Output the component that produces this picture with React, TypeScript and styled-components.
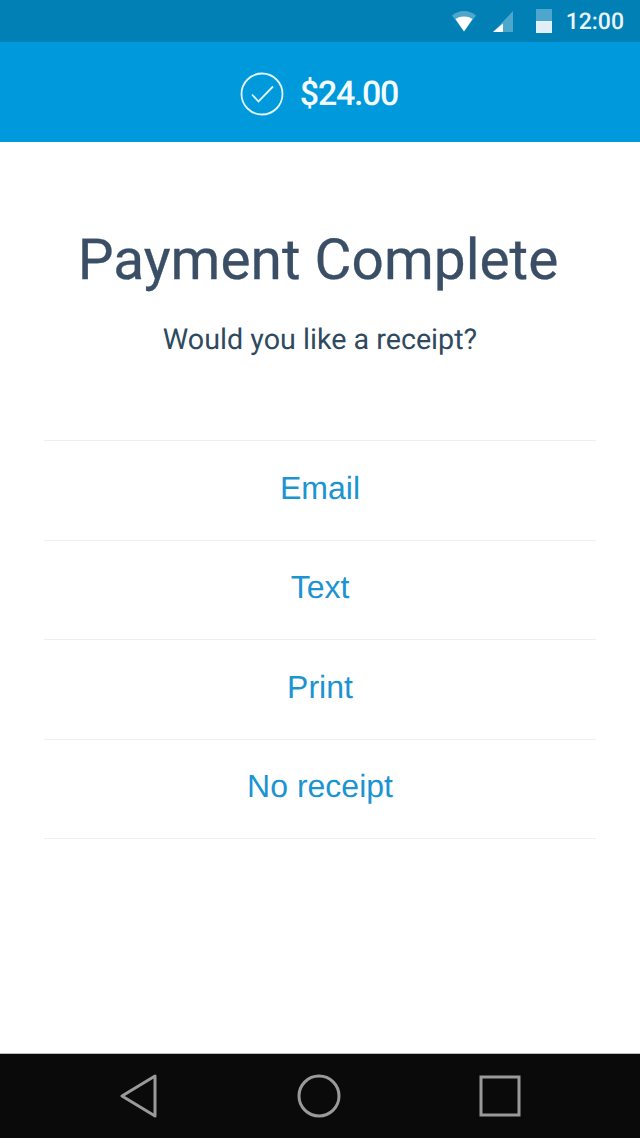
import { createGlobalStyle, styled } from "styled-components";

const receiptOptions = ["Email", "Text", "Print", "No receipt"];

const App = () => {
  return (
    <>
      <GlobalStyle />
      <Screen>
        <StatusBar>
          <svg width="26" height="22" viewBox="0 0 26 22">
            <path d="M1 5.500C4.500 2.500 8.500 1 13 1s8.500 1.500 12 4.500L13 21.500z" fill="#fff" fillOpacity="0.3" />
            <path d="M4.500 9C7 7.300 9.800 6.500 13 6.500s6 .8 8.500 2.500L13 21.500z" fill="#fff" />
          </svg>
          <SignalIcon width="22" height="24" viewBox="0 0 22 24">
            <path d="M1 23 21 2v21z" fill="#fff" fillOpacity="0.3" />
            <path d="M1 23 11 14.500V23z" fill="#fff" />
          </SignalIcon>
          <BatteryIcon width="16" height="24" viewBox="0 0 16 24">
            <rect width="16" height="13" fill="#fff" fillOpacity="0.3" />
            <rect y="12" width="16" height="12" fill="#fff" fillOpacity="0.88" />
          </BatteryIcon>
          <Clock>12:00</Clock>
        </StatusBar>
        <Header>
          <svg width="44" height="44" viewBox="0 0 44 44">
            <circle cx="22" cy="22" r="20.500" fill="none" stroke="#e4f5fc" strokeWidth="1.800" />
            <path d="M12 22.500l6.500 7L33 14.500" fill="none" stroke="#e4f5fc" strokeWidth="1.800" />
          </svg>
          <Amount>$24.00</Amount>
        </Header>
        <Content>
          <Title>Payment Complete</Title>
          <Subtitle>Would you like a receipt?</Subtitle>
          <OptionList>
            {receiptOptions.map((item) => (
              <Option key={item}>{item}</Option>
            ))}
          </OptionList>
        </Content>
        <NavBar>
          <svg width="38" height="44" viewBox="0 0 38 44">
            <path d="M35 2v40L2 22z" fill="none" stroke="#9a9a9a" strokeWidth="3" strokeLinejoin="round" />
          </svg>
          <svg width="44" height="44" viewBox="0 0 44 44">
            <circle cx="22" cy="22" r="20" fill="none" stroke="#9a9a9a" strokeWidth="3" />
          </svg>
          <svg width="42" height="42" viewBox="0 0 42 42">
            <rect x="2" y="2" width="38" height="38" fill="none" stroke="#9a9a9a" strokeWidth="3" />
          </svg>
        </NavBar>
      </Screen>
    </>
  );
};

export default App;

const GlobalStyle = createGlobalStyle`
  body {
    margin: 0;
    background: #fff;
    font-family: Roboto, sans-serif;
    text-rendering: geometricPrecision;
  }
`;

const Screen = styled.div`
  width: 640px;
  height: 1138px;
  display: flex;
  flex-direction: column;
  overflow: hidden;
`;

const StatusBar = styled.div`
  height: 42px;
  flex-shrink: 0;
  display: flex;
  align-items: center;
  justify-content: flex-end;
  padding-right: 16px;
  background: #0180b5;
`;

const SignalIcon = styled.svg`
  margin-left: 15px;
`;

const BatteryIcon = styled.svg`
  margin-left: 22px;
`;

const Clock = styled.span`
  margin-left: 14px;
  font-size: 23px;
  font-weight: 500;
  color: #eaf6fb;
`;

const Header = styled.div`
  height: 100px;
  flex-shrink: 0;
  box-sizing: border-box;
  display: flex;
  align-items: center;
  justify-content: center;
  gap: 16px;
  padding: 4px 2px 0 0;
  background: #0099dc;
`;

const Amount = styled.span`
  font-size: 34px;
  font-weight: 500;
  letter-spacing: -1.300px;
  color: #f4fbfe;
`;

const Content = styled.div`
  flex: 1;
  display: flex;
  flex-direction: column;
  align-items: center;
  padding: 82px 44px 0;
`;

const Title = styled.h1`
  margin: 0 4px 0 0;
  font-size: 56.800px;
  line-height: 72px;
  font-weight: 400;
  color: #3a4f66;
  -webkit-text-stroke: 0.3px #3a4f66;
`;

const Subtitle = styled.p`
  margin: 26px 0 0;
  font-size: 28.700px;
  line-height: 36px;
  color: #2f4a60;
`;

const OptionList = styled.div`
  width: 100%;
  margin-top: 82px;
  border-top: 1px solid #eeeff3;
`;

const Option = styled.div`
  height: 99.500px;
  box-sizing: border-box;
  display: flex;
  align-items: center;
  justify-content: center;
  padding-bottom: 4px;
  border-bottom: 1px solid #eeeff3;
  font-family: "Liberation Sans", Arial, sans-serif;
  font-size: 32px;
  color: #1c94d2;
`;

const NavBar = styled.div`
  height: 85px;
  flex-shrink: 0;
  display: flex;
  align-items: center;
  justify-content: space-between;
  padding: 0 119px 0 120px;
  background: #0a0a0a;
  border-top: 1px solid #bcbcbc;
  box-sizing: border-box;
`;
